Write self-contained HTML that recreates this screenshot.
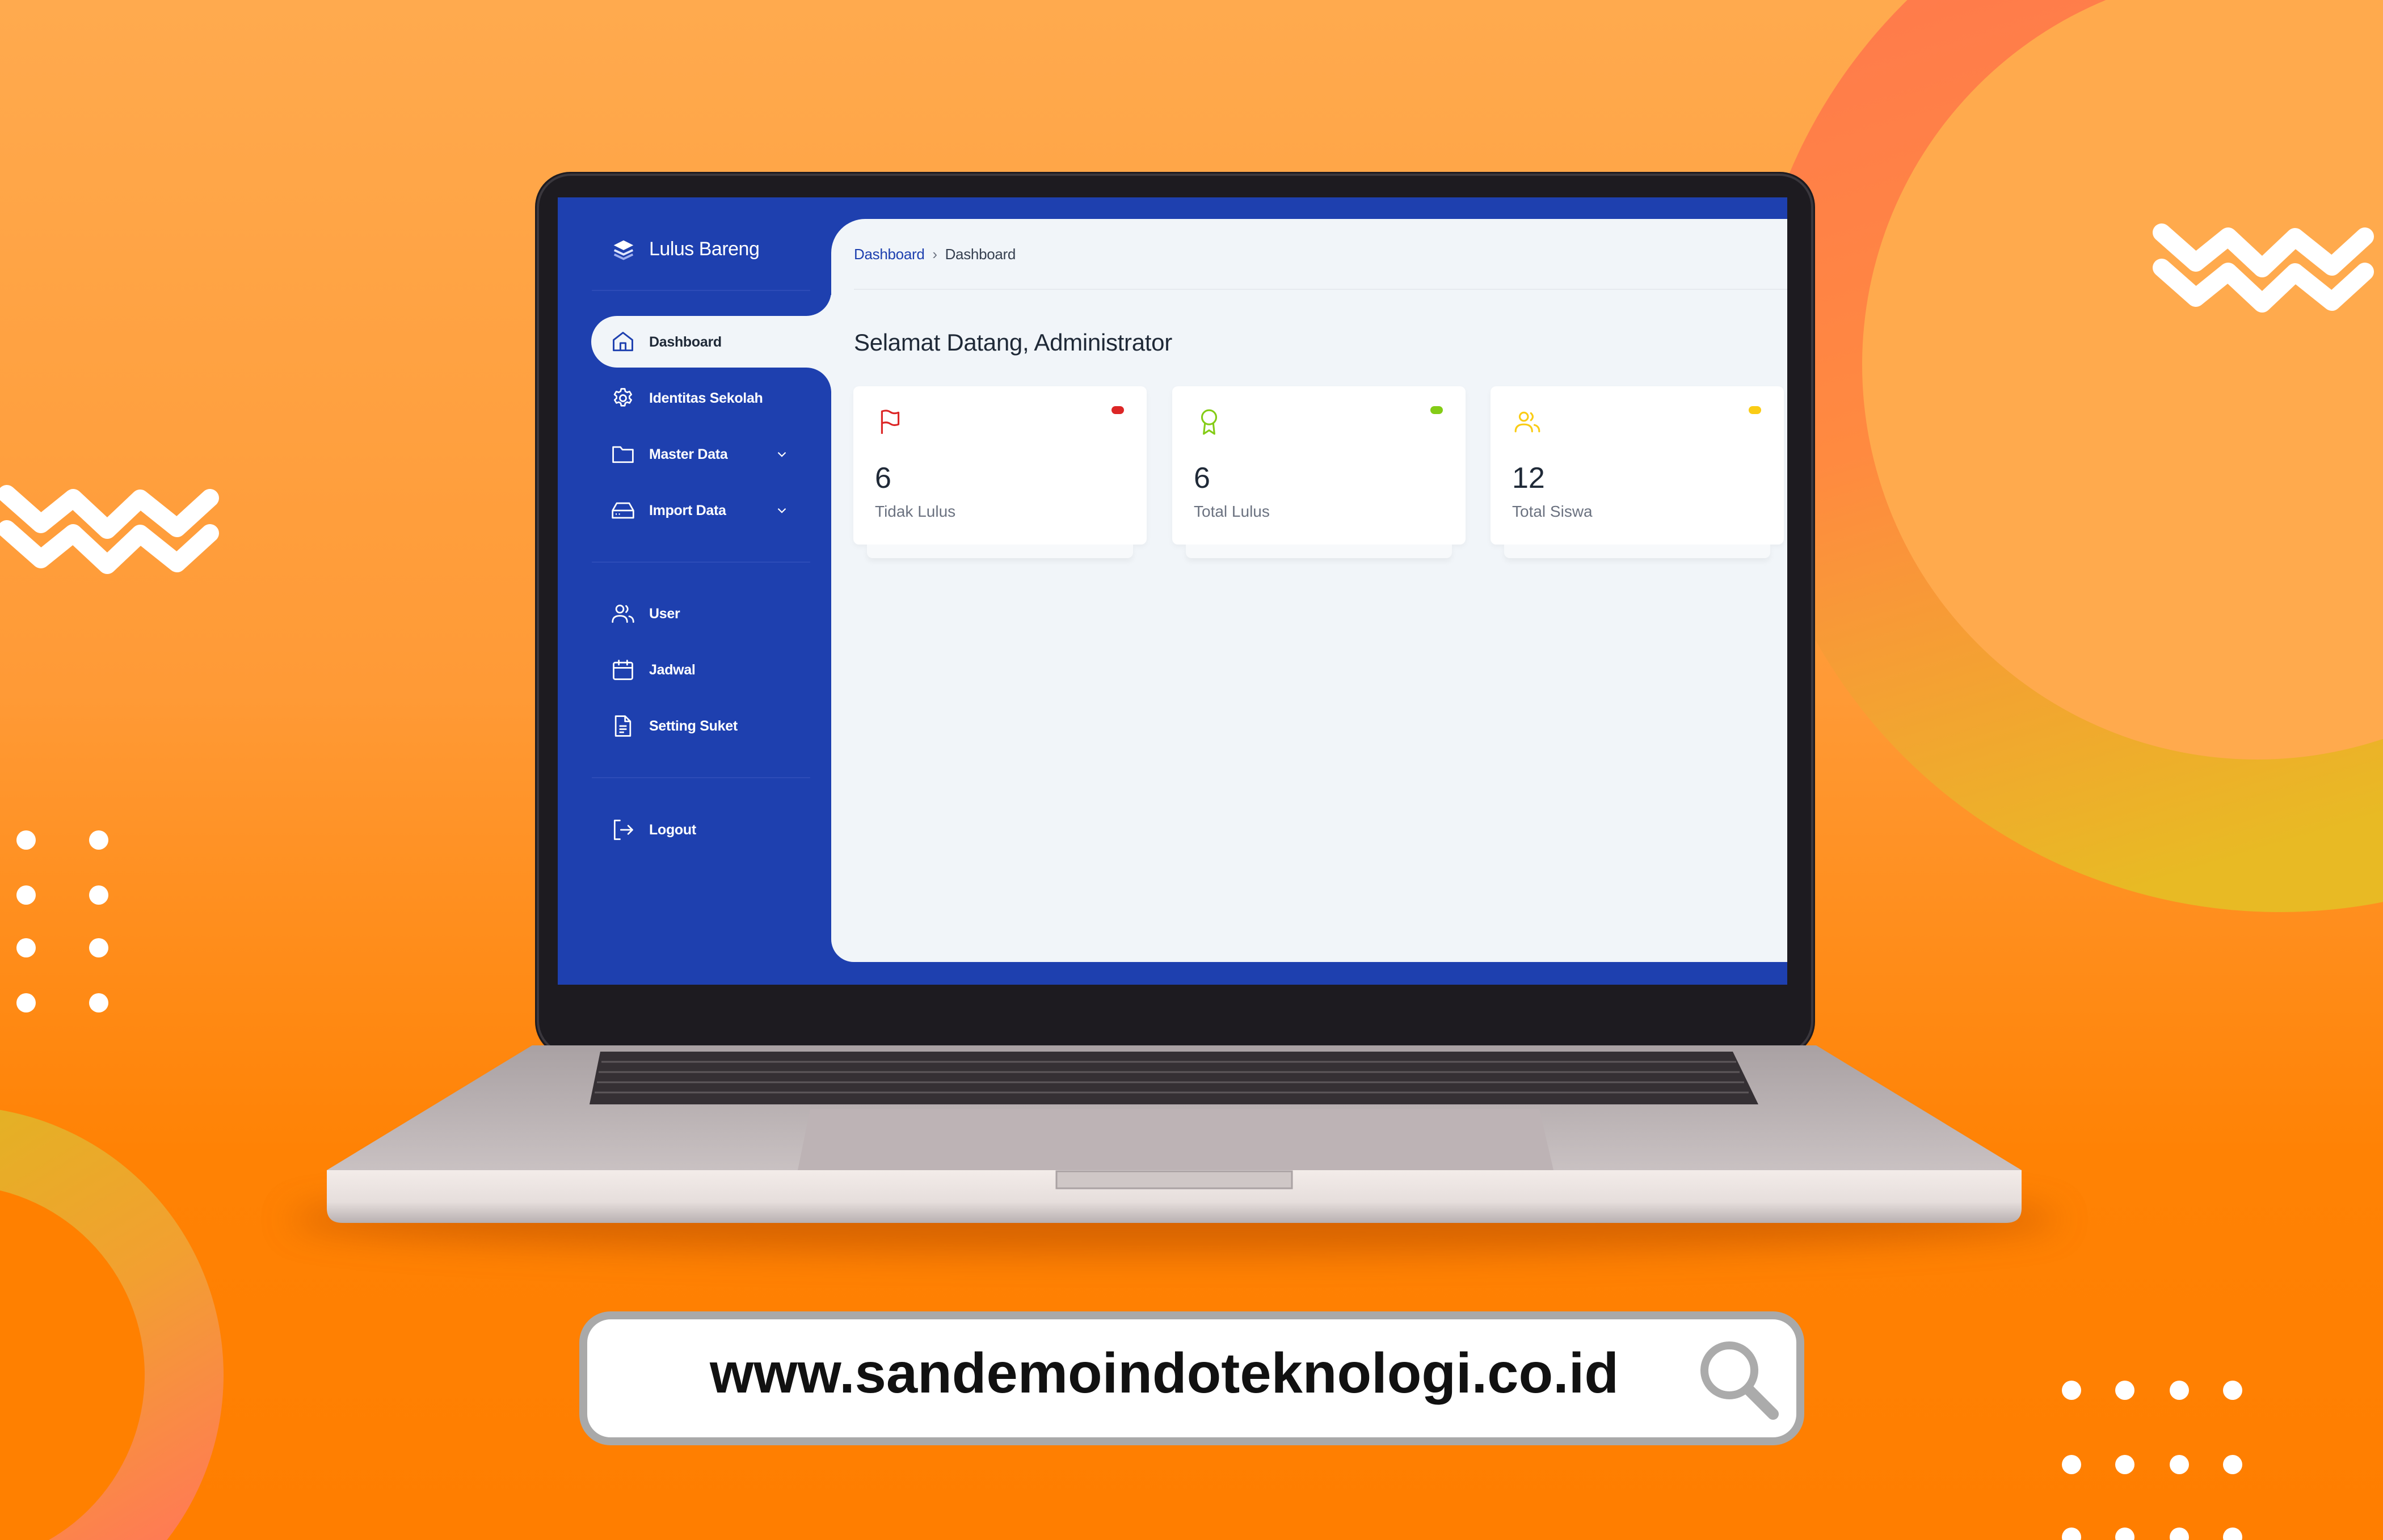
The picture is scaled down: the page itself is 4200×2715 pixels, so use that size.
<!DOCTYPE html>
<html style="overflow:hidden;width:4200px;height:2715px"><head><meta charset="utf-8"><style>
*{margin:0;padding:0;box-sizing:border-box}
body{width:4200px;height:2715px;overflow:hidden;position:relative;font-family:"Liberation Sans",sans-serif;background:linear-gradient(180deg,#FFAA4E 0%,#FF9A36 45%,#FF8204 75%,#FF7E00 100%)}
.abs{position:absolute}
.blue{background:#1E40AF}
.nav{position:absolute;left:1076px;color:#fff;font-size:25px;font-weight:bold;letter-spacing:-0.3px;height:44px;display:flex;align-items:center}
.nav svg{width:44px;height:44px;margin-right:24px;flex:none}
.chev{position:absolute;left:1365px;width:26px;height:26px}
.sep{position:absolute;left:1043px;width:385px;height:2px;background:#2d4cb8}
.card{position:absolute;top:681px;width:517px;height:279px;background:#fff;border-radius:10px;box-shadow:0 4px 10px rgba(0,0,0,0.04)}
.card .under{position:absolute;left:24px;right:24px;top:279px;height:24px;background:#f7f9fb;border-radius:0 0 10px 10px;box-shadow:0 6px 10px rgba(0,0,0,0.05)}
.card svg.ic{position:absolute;left:40px;top:38px;width:50px;height:50px}
.card .dot{position:absolute;right:40px;top:35px;width:22px;height:14px;border-radius:7px}
.card .num{position:absolute;left:38px;top:132px;font-size:52px;color:#1f2937}
.card .lab{position:absolute;left:38px;top:205px;font-size:28px;color:#6b7280}
</style></head><body>
<svg class="abs" style="left:0;top:0" width="4200" height="2715">
<defs>
<linearGradient id="ring1" x1="0" y1="0" x2="0.3" y2="1"><stop offset="0" stop-color="#FF7550"/><stop offset="0.55" stop-color="#FF8A40"/><stop offset="1" stop-color="#E8BA24"/></linearGradient>
<linearGradient id="ring2" x1="0" y1="0" x2="0.6" y2="1"><stop offset="0" stop-color="#D9BE1C"/><stop offset="0.6" stop-color="#F2A030"/><stop offset="1" stop-color="#FF7A55"/></linearGradient>
<linearGradient id="base" x1="0" y1="0" x2="0" y2="1"><stop offset="0" stop-color="#a9a1a3"/><stop offset="1" stop-color="#c9c1c2"/></linearGradient>
<linearGradient id="lip" x1="0" y1="0" x2="0" y2="1"><stop offset="0" stop-color="#f3ece9"/><stop offset="0.6" stop-color="#e6dedc"/><stop offset="1" stop-color="#b8b0b1"/></linearGradient>
<filter id="bl" x="-20%" y="-50%" width="140%" height="200%"><feGaussianBlur stdDeviation="30"/></filter>
</defs>
<circle cx="4018" cy="670" r="938" fill="url(#ring1)"/>
<circle cx="3978" cy="643" r="696" fill="#FFAA4D"/>
<circle cx="-80" cy="2424" r="474" fill="url(#ring2)"/>
<circle cx="-80" cy="2424" r="335" fill="#FF8000"/>
<g fill="none" stroke="#fff" stroke-width="32" stroke-linecap="round" stroke-linejoin="round">
<polyline points="3810,410 3870,463 3927,417 3987,473 4045,418 4110,470 4168,417"/>
<polyline points="3810,472 3870,525 3927,479 3987,535 4045,480 4110,532 4168,479"/>
<polyline points="12,871 72,924 129,878 189,934 247,879 312,931 370,878"/>
<polyline points="12,933 72,986 129,940 189,996 247,941 312,993 370,940"/>
</g>
<g fill="#fff">
<circle cx="46" cy="1481" r="17"/><circle cx="174" cy="1481" r="17"/>
<circle cx="46" cy="1578" r="17"/><circle cx="174" cy="1578" r="17"/>
<circle cx="46" cy="1671" r="17"/><circle cx="174" cy="1671" r="17"/>
<circle cx="46" cy="1768" r="17"/><circle cx="174" cy="1768" r="17"/>
<circle cx="3651" cy="2451" r="17"/><circle cx="3745" cy="2451" r="17"/><circle cx="3841" cy="2451" r="17"/><circle cx="3935" cy="2451" r="17"/>
<circle cx="3651" cy="2582" r="17"/><circle cx="3745" cy="2582" r="17"/><circle cx="3841" cy="2582" r="17"/><circle cx="3935" cy="2582" r="17"/>
<circle cx="3651" cy="2710" r="17"/><circle cx="3745" cy="2710" r="17"/><circle cx="3841" cy="2710" r="17"/><circle cx="3935" cy="2710" r="17"/>
</g>
<ellipse cx="2070" cy="2150" rx="1560" ry="60" fill="#B84E00" opacity="0.55" filter="url(#bl)"/>
<rect x="943" y="303" width="2256" height="1560" rx="62" fill="#1d1b20"/>
<rect x="948" y="308" width="2246" height="1550" rx="58" fill="none" stroke="#3a373d" stroke-width="4"/>
<path d="M938,1843 L3201,1843 L3563,2063 L576,2063 Z" fill="url(#base)"/>
<path d="M576,2063 L3563,2063 L3563,2130 Q3563,2156 3535,2156 L604,2156 Q576,2156 576,2130 Z" fill="url(#lip)"/>
<path d="M1058,1854 L3054,1854 L3099,1947 L1039,1947 Z" fill="#353034"/>
<g stroke="#5d575a" stroke-width="3">
<line x1="1060" y1="1872" x2="3060" y2="1872"/><line x1="1055" y1="1890" x2="3066" y2="1890"/><line x1="1052" y1="1908" x2="3074" y2="1908"/><line x1="1048" y1="1926" x2="3082" y2="1926"/>
</g>
<path d="M1428,1955 L2713,1955 L2738,2063 L1406,2063 Z" fill="#bdb3b5"/>
<rect x="1862" y="2065" width="415" height="30" fill="#cfc7c6" stroke="#aaa2a3" stroke-width="3"/>
<rect x="1028" y="2319" width="2145" height="222" rx="48" fill="#fff" stroke="#a9a9a9" stroke-width="14"/>
<text x="1251" y="2455" font-family="Liberation Sans" font-weight="bold" font-size="100" fill="#111" textLength="1602" lengthAdjust="spacingAndGlyphs">www.sandemoindoteknologi.co.id</text>
<circle cx="3048" cy="2416" r="44" fill="none" stroke="#ababab" stroke-width="14"/>
<line x1="3082" y1="2450" x2="3125" y2="2493" stroke="#ababab" stroke-width="20" stroke-linecap="round"/>
</svg>

<div class="abs blue" style="left:983px;top:348px;width:2167px;height:1388px"></div>
<div class="abs" style="left:1400px;top:520px;width:120px;height:170px;background:#F1F5F9"></div>
<div class="abs" style="left:1465px;top:386px;width:1685px;height:1310px;background:#F1F5F9;border-top-left-radius:60px;border-bottom-left-radius:40px"></div>
<div class="abs blue" style="left:983px;top:348px;width:482px;height:209px;border-bottom-right-radius:44px"></div>
<div class="abs blue" style="left:983px;top:648px;width:482px;height:1088px;border-top-right-radius:44px"></div>
<div class="abs" style="left:1042px;top:557px;width:440px;height:91px;background:#F1F5F9;border-radius:46px 0 0 46px"></div>

<svg class="abs" style="left:1076px;top:418px" width="46" height="46" viewBox="0 0 24 24"><path d="M12 3 L21 7.5 L12 12 L3 7.5 Z" fill="#fff"/><path d="M3.5 12 L12 16 L20.5 12" fill="none" stroke="#dfe6ff" stroke-width="2"/><path d="M3.5 16 L12 20 L20.5 16" fill="none" stroke="#9fb0ee" stroke-width="2"/></svg>
<div class="abs" style="left:1144px;top:420px;color:#fff;font-size:34px;letter-spacing:-0.5px">Lulus Bareng</div>
<div class="sep" style="top:511px"></div>

<div class="nav" style="top:581px;color:#1f2937"><svg viewBox="0 0 24 24" fill="none" stroke="#1E40AF" stroke-width="1.6" stroke-linejoin="round"><path d="M3 10 L12 3 L21 10 V20 H3 Z"/><path d="M9.5 20 V13 H14.5 V20"/></svg>Dashboard</div>
<div class="nav" style="top:680px"><svg viewBox="0 0 24 24" fill="none" stroke="#fff" stroke-width="1.5"><path d="M10.3 3h3.4l.5 2.4 1.8 1 2.3-.8 1.7 2.9-1.8 1.6v2l1.8 1.6-1.7 2.9-2.3-.8-1.8 1-.5 2.4h-3.4l-.5-2.4-1.8-1-2.3.8-1.7-2.9 1.8-1.6v-2L3.9 8.5l1.7-2.9 2.3.8 1.8-1z" stroke-linejoin="round"/><circle cx="12" cy="12" r="3"/></svg>Identitas Sekolah</div>
<div class="nav" style="top:779px"><svg viewBox="0 0 24 24" fill="none" stroke="#fff" stroke-width="1.5" stroke-linejoin="round"><path d="M2.5 5 H9.5 L11.5 7.5 H21.5 V19.5 H2.5 Z"/></svg>Master Data</div>
<svg class="chev" style="top:788px" viewBox="0 0 24 24" fill="none" stroke="#fff" stroke-width="2"><path d="M6 9 L12 15 L18 9"/></svg>
<div class="nav" style="top:878px"><svg viewBox="0 0 24 24" fill="none" stroke="#fff" stroke-width="1.5" stroke-linejoin="round"><path d="M6 5 H18 L22 12 V19 H2 V12 Z"/><path d="M2 12 H22"/><path d="M5 15.5 H6 M8 15.5 H9"/></svg>Import Data</div>
<svg class="chev" style="top:887px" viewBox="0 0 24 24" fill="none" stroke="#fff" stroke-width="2"><path d="M6 9 L12 15 L18 9"/></svg>
<div class="sep" style="top:990px"></div>
<div class="nav" style="top:1060px"><svg viewBox="0 0 24 24" fill="none" stroke="#fff" stroke-width="1.5" stroke-linecap="round"><circle cx="9" cy="7.5" r="3.5"/><path d="M2 20 Q2 14 9 14 Q16 14 16 20"/><path d="M15 4.5 Q18 7.5 15 10.5"/><path d="M18 14.5 Q22 15.5 22 20"/></svg>User</div>
<div class="nav" style="top:1159px"><svg viewBox="0 0 24 24" fill="none" stroke="#fff" stroke-width="1.5" stroke-linecap="round"><rect x="3" y="5" width="18" height="16" rx="1.5"/><path d="M3 10 H21 M8 3 V7 M16 3 V7"/></svg>Jadwal</div>
<div class="nav" style="top:1258px"><svg viewBox="0 0 24 24" fill="none" stroke="#fff" stroke-width="1.5" stroke-linejoin="round"><path d="M5 2.5 H14 L19 7.5 V21.5 H5 Z"/><path d="M14 2.5 V7.5 H19 M8.5 12 H15.5 M8.5 15 H15.5 M8.5 18 H13"/></svg>Setting Suket</div>
<div class="sep" style="top:1370px"></div>
<div class="nav" style="top:1441px"><svg viewBox="0 0 24 24" fill="none" stroke="#fff" stroke-width="1.5" stroke-linecap="round" stroke-linejoin="round"><path d="M9 3 H4 V21 H9"/><path d="M10 12 H21 M17 8 L21 12 L17 16"/></svg>Logout</div>

<div class="abs" style="left:1505px;top:433px;font-size:26px;color:#1E40AF;letter-spacing:-0.3px">Dashboard <span style="color:#6b7280">&nbsp;›&nbsp;</span> <span style="color:#374151">Dashboard</span></div>
<div class="abs" style="left:1505px;top:509px;width:1645px;height:2px;background:#e6eaef"></div>
<div class="abs" style="left:1505px;top:580px;font-size:42px;color:#1f2937;letter-spacing:-0.3px">Selamat Datang, Administrator</div>

<div class="card" style="left:1504px"><div class="under"></div>
<svg class="ic" viewBox="0 0 24 24" fill="none" stroke="#dc2626" stroke-width="1.5" stroke-linejoin="round"><path d="M5 22 V3 Q9 1.5 12 3.5 Q15 5.5 19 4 V14 Q15 15.5 12 13.5 Q9 11.5 5 13"/></svg>
<div class="dot" style="background:#dc2626"></div><div class="num">6</div><div class="lab">Tidak Lulus</div></div>
<div class="card" style="left:2066px"><div class="under"></div>
<svg class="ic" viewBox="0 0 24 24" fill="none" stroke="#84cc16" stroke-width="1.5" stroke-linejoin="round"><circle cx="12" cy="8" r="6"/><path d="M8.5 13 L7.5 22 L12 19 L16.5 22 L15.5 13"/></svg>
<div class="dot" style="background:#84cc16"></div><div class="num">6</div><div class="lab">Total Lulus</div></div>
<div class="card" style="left:2627px"><div class="under"></div>
<svg class="ic" viewBox="0 0 24 24" fill="none" stroke="#facc15" stroke-width="1.5" stroke-linecap="round"><circle cx="9" cy="7.5" r="3.5"/><path d="M2 20 Q2 14 9 14 Q16 14 16 20"/><path d="M15 4.5 Q18 7.5 15 10.5"/><path d="M18 14.5 Q22 15.5 22 20"/></svg>
<div class="dot" style="background:#facc15"></div><div class="num">12</div><div class="lab">Total Siswa</div></div>
</body></html>
